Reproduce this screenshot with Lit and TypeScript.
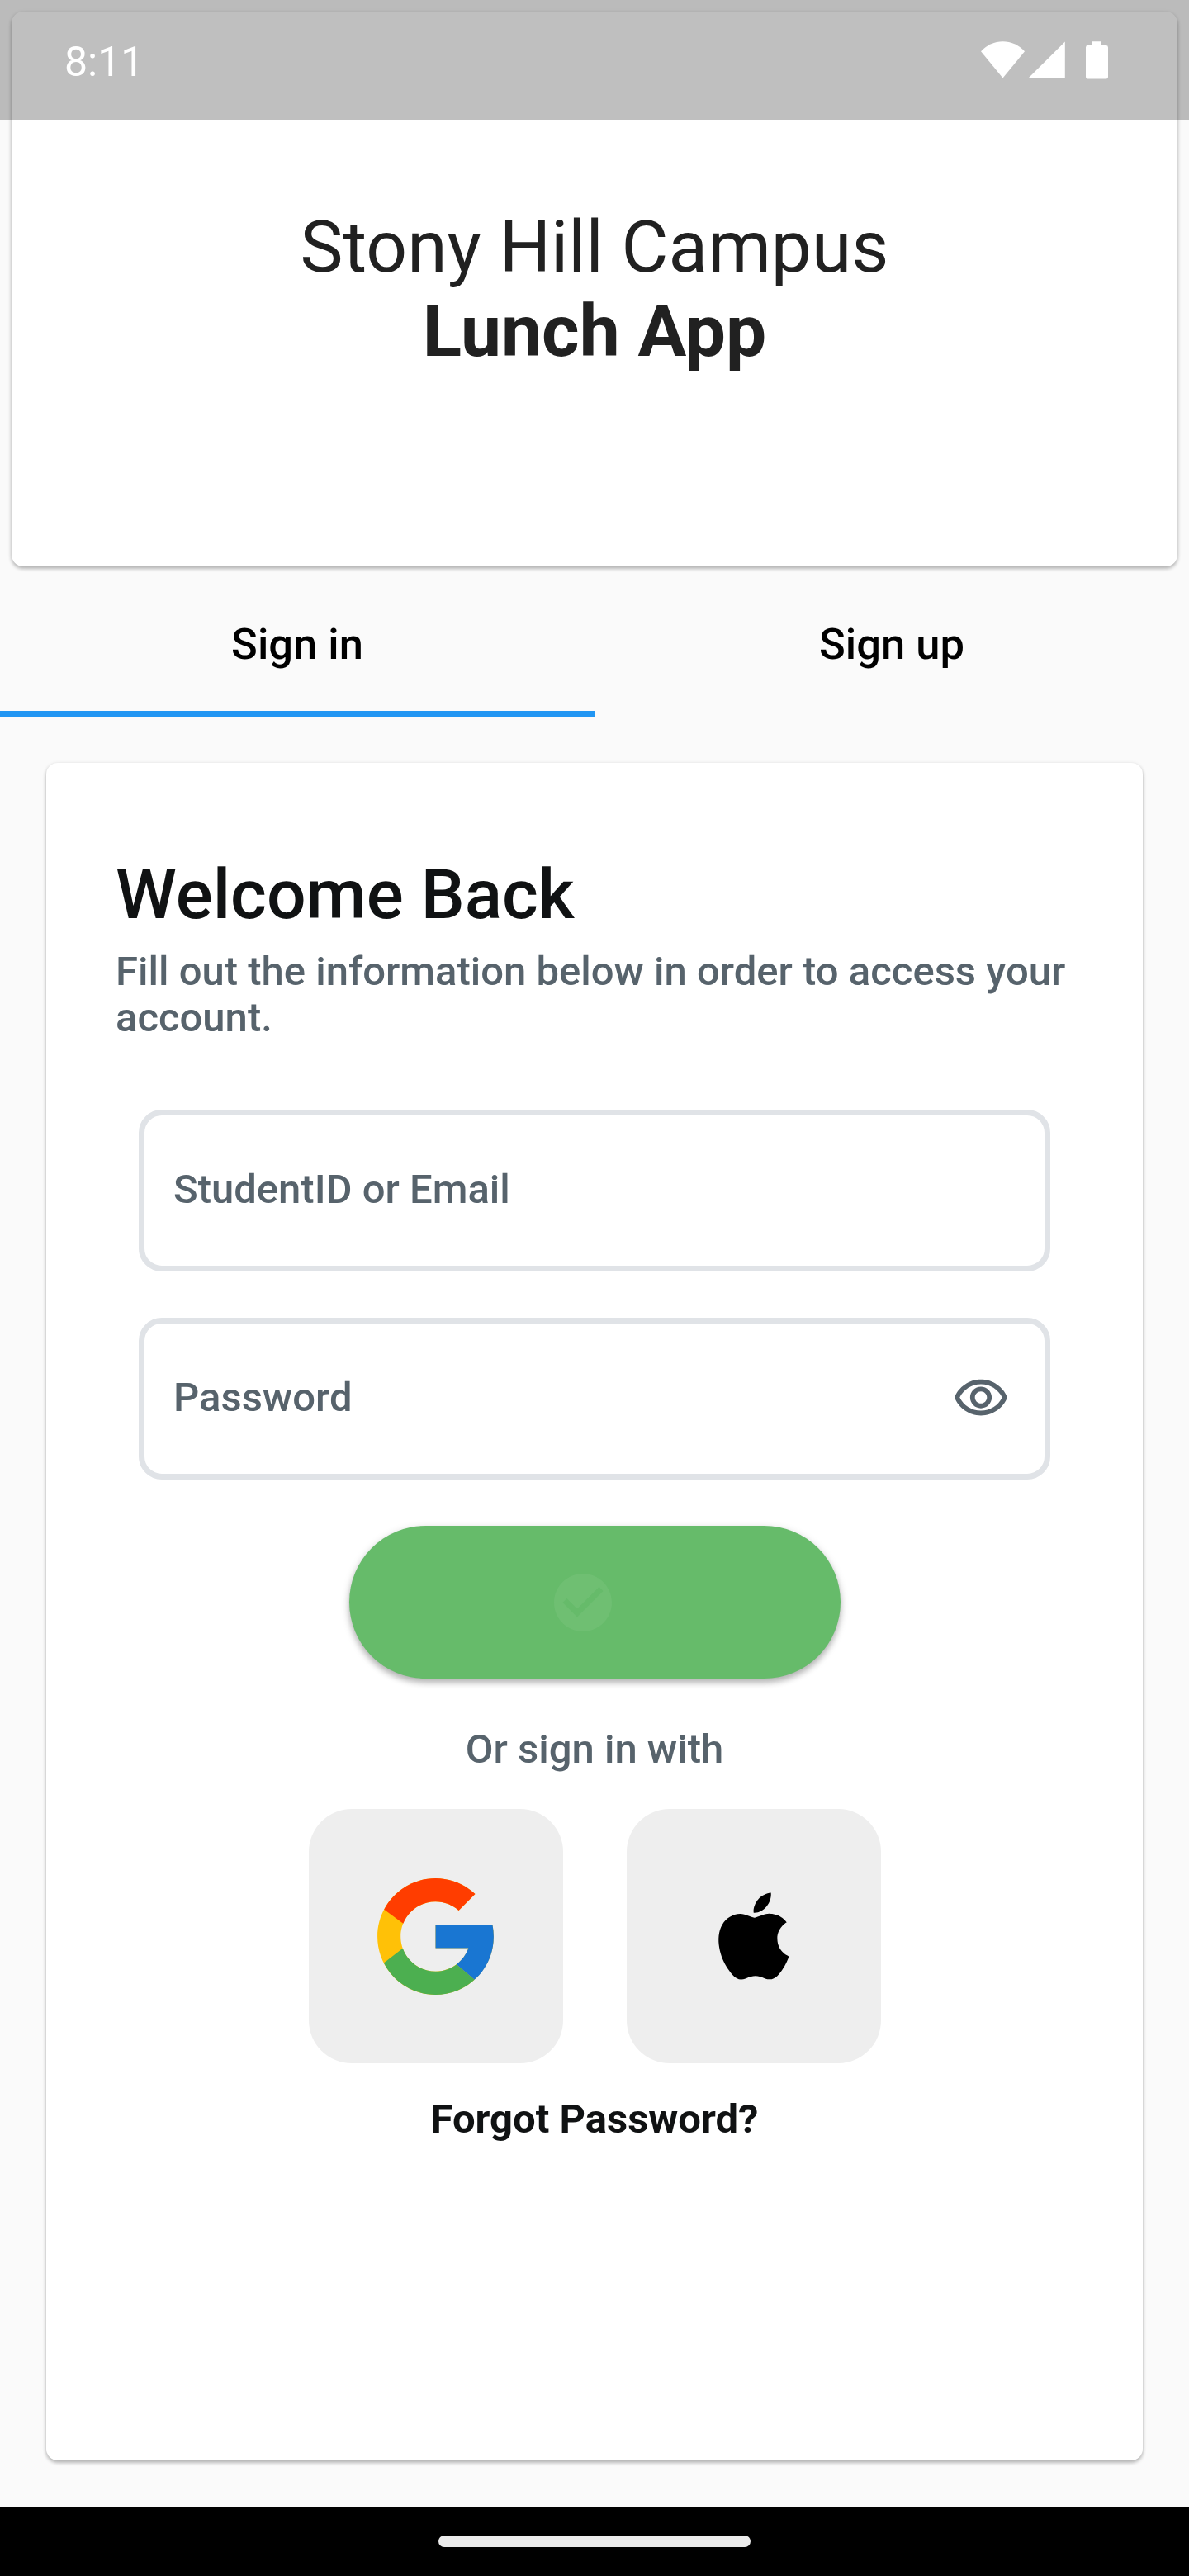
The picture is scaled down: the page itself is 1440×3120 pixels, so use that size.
import { LitElement, html, css, svg } from "lit";
import { customElement, property } from "lit/decorators.js";

const eyeIcon = svg`<path d="M12 6c3.79 0 7.17 2.13 8.82 5.5C19.17 14.87 15.79 17 12 17s-7.17-2.13-8.82-5.5C4.83 8.13 8.21 6 12 6m0-2C7 4 2.73 7.11 1 11.5 2.73 15.89 7 19 12 19s9.27-3.11 11-7.5C21.27 7.11 17 4 12 4zm0 5c1.38 0 2.5 1.12 2.5 2.5S13.38 14 12 14s-2.5-1.12-2.5-2.5S10.62 9 12 9m0-2c-2.48 0-4.5 2.02-4.5 4.5S9.52 16 12 16s4.5-2.02 4.5-4.5S14.48 7 12 7z"/>`;

@customElement("status-bar")
export class StatusBar extends LitElement {
  @property() time = "";

  static styles = css`
    :host {
      display: flex;
      justify-content: space-between;
      box-sizing: border-box;
      height: 145px;
      padding: 0 98px 0 78px;
      background: rgba(0, 0, 0, 0.25);
      color: #fff;
    }
    .time {
      font-size: 50px;
      line-height: 58px;
      padding-top: 46px;
    }
    .icons {
      display: block;
      margin-top: 50px;
    }
  `;

  render() {
    return html`
      <span class="time">${this.time}</span>
      <svg class="icons" width="154" height="46" viewBox="0 0 154 46" fill="#fff">
        <path d="M0 12.2C7.2 4.4 16.6.3 26.5.3S45.8 4.4 53 12.2L26.5 44.5z" />
        <path d="M57.5 44.6L101.8.5V44.6z" />
        <path d="M134.8.2h11.2v4.9h5.6a2.4 2.4 0 0 1 2.4 2.4v35.7a2.4 2.4 0 0 1-2.4 2.4h-22.2a2.4 2.4 0 0 1-2.4-2.4V7.5a2.4 2.4 0 0 1 2.4-2.4h5.4z" />
      </svg>
    `;
  }
}

@customElement("outlined-field")
export class OutlinedField extends LitElement {
  @property() label = "";
  @property({ type: Boolean }) secret = false;

  static styles = css`
    :host {
      display: flex;
      align-items: center;
      justify-content: space-between;
      box-sizing: border-box;
      height: 196px;
      padding: 0 42px 0 35px;
      border: 7px solid #e0e3e7;
      border-radius: 28px;
      background: #fff;
      color: #57636c;
      font-size: 49px;
      font-weight: 500;
      line-height: 57px;
    }
    .label {
      padding-bottom: 3px;
    }
    .eye {
      display: block;
      width: 70px;
      height: 70px;
      fill: #57636c;
    }
  `;

  render() {
    return html`
      <span class="label">${this.label}</span>
      ${this.secret ? html`<svg class="eye" viewBox="0 0 24 24">${eyeIcon}</svg>` : null}
    `;
  }
}

@customElement("app-root")
export class AppRoot extends LitElement {
  static styles = css`
    :host {
      display: flex;
      flex-direction: column;
      position: relative;
      box-sizing: border-box;
      width: 1440px;
      height: 3120px;
      background: #fafafa;
      font-family: Roboto, sans-serif;
      overflow: hidden;
    }
    .status {
      position: absolute;
      top: 0;
      left: 0;
      right: 0;
    }
    .card {
      box-sizing: border-box;
      background: #fff;
      border-radius: 14px;
      box-shadow: 0 3px 4px rgba(0, 0, 0, 0.22), 0 1px 5px rgba(0, 0, 0, 0.12);
    }
    .banner {
      height: 672px;
      margin: 14px 14px 0;
      padding-top: 234px;
      text-align: center;
      color: #212121;
      font-size: 87.5px;
      line-height: 102px;
    }
    .banner b {
      display: block;
      font-weight: 700;
    }
    .tabs {
      display: grid;
      grid-template-columns: 1fr 1fr;
      height: 168px;
      margin-top: 14px;
    }
    .tab {
      box-sizing: border-box;
      padding-top: 49px;
      border-bottom: 7px solid transparent;
      text-align: center;
      color: #000;
      font-size: 52.5px;
      font-weight: 500;
      line-height: 62px;
    }
    .active {
      border-bottom-color: #2196f3;
    }
    .panel {
      display: flex;
      flex-direction: column;
      align-items: center;
      height: 2056px;
      margin: 56px 56px 0;
      padding: 111px 84px 0;
    }
    .heading {
      align-self: stretch;
      color: #101213;
      font-size: 84px;
      font-weight: 500;
      line-height: 98px;
      margin: 0;
    }
    .hint {
      align-self: stretch;
      margin: 16px 0 0;
      color: #57636c;
      font-size: 49px;
      font-weight: 500;
      line-height: 56px;
    }
    .fields {
      display: flex;
      flex-direction: column;
      align-self: stretch;
      gap: 56px;
      margin: 83px 28px 0;
    }
    .submit {
      display: flex;
      align-items: center;
      justify-content: center;
      box-sizing: border-box;
      width: 595px;
      height: 185px;
      margin-top: 56px;
      padding-right: 28px;
      border-radius: 93px;
      background: #66bb6a;
      box-shadow: 0 5px 7px rgba(0, 0, 0, 0.2), 0 3px 11px rgba(0, 0, 0, 0.16);
    }
    .check {
      display: block;
      width: 84px;
      height: 84px;
      fill: rgba(255, 255, 255, 0.06);
    }
    .or {
      margin-top: 57px;
      color: #57636c;
      font-size: 49px;
      font-weight: 500;
      line-height: 58px;
    }
    .social {
      display: flex;
      gap: 77px;
      margin-top: 43px;
    }
    .tile {
      display: flex;
      align-items: center;
      justify-content: center;
      width: 308px;
      height: 308px;
      border-radius: 52px;
      background: #eee;
    }
    .google {
      width: 169px;
      height: 169px;
    }
    .apple {
      width: 126px;
      height: 126px;
    }
    .forgot {
      margin-top: 39px;
      color: #101213;
      font-size: 49px;
      font-weight: 700;
      line-height: 58px;
    }
    .nav {
      display: flex;
      align-items: center;
      justify-content: center;
      height: 84px;
      margin-top: auto;
      background: #000;
    }
    .pill {
      width: 378px;
      height: 14px;
      border-radius: 7px;
      background: #ebebeb;
    }
  `;

  render() {
    return html`
      <header class="card banner">Stony Hill Campus<b>Lunch App</b></header>
      <nav class="tabs">
        <div class="tab active">Sign in</div>
        <div class="tab">Sign up</div>
      </nav>
      <main class="card panel">
        <h1 class="heading">Welcome Back</h1>
        <p class="hint">Fill out the information below in order to access your account.</p>
        <div class="fields">
          <outlined-field label="StudentID or Email"></outlined-field>
          <outlined-field label="Password" secret></outlined-field>
        </div>
        <div class="submit" role="button">
          <svg class="check" viewBox="0 0 24 24">
            <path d="M12 2C6.48 2 2 6.48 2 12s4.48 10 10 10 10-4.48 10-10S17.52 2 12 2zm-2 15l-5-5 1.41-1.41L10 14.17l7.59-7.59L19 8l-9 9z" />
          </svg>
        </div>
        <div class="or">Or sign in with</div>
        <div class="social">
          <div class="tile">
            <svg class="google" viewBox="0 0 48 48">
              <path fill="#FFC107" d="M43.611 20.083H42V20H24v8h11.303c-1.649 4.657-6.08 8-11.303 8-6.627 0-12-5.373-12-12s5.373-12 12-12c3.059 0 5.842 1.154 7.961 3.039l5.657-5.657C34.046 6.053 29.268 4 24 4 12.955 4 4 12.955 4 24s8.955 20 20 20 20-8.955 20-20c0-1.341-.138-2.65-.389-3.917z" />
              <path fill="#FF3D00" d="M6.306 14.691l6.571 4.819C14.655 15.108 18.961 12 24 12c3.059 0 5.842 1.154 7.961 3.039l5.657-5.657C34.046 6.053 29.268 4 24 4 16.318 4 9.656 8.337 6.306 14.691z" />
              <path fill="#4CAF50" d="M24 44c5.166 0 9.86-1.977 13.409-5.192l-6.19-5.238C29.211 35.091 26.715 36 24 36c-5.202 0-9.619-3.317-11.283-7.946l-6.522 5.025C9.505 39.556 16.227 44 24 44z" />
              <path fill="#1976D2" d="M43.611 20.083H42V20H24v8h11.303c-.792 2.237-2.231 4.166-4.087 5.571l6.19 5.238C36.971 39.205 44 34 44 24c0-1.341-.138-2.65-.389-3.917z" />
            </svg>
          </div>
          <div class="tile">
            <svg class="apple" viewBox="0 0 24 24">
              <path d="M18.71 19.5c-.83 1.24-1.71 2.45-3.05 2.47-1.34.03-1.77-.79-3.29-.79-1.53 0-2 .77-3.27.82-1.31.05-2.3-1.32-3.14-2.53C4.25 17 2.94 12.45 4.7 9.39c.87-1.52 2.43-2.48 4.12-2.51 1.28-.02 2.5.87 3.29.87.78 0 2.26-1.07 3.81-.91.65.03 2.47.26 3.64 1.98-.09.06-2.17 1.28-2.15 3.81.03 3.02 2.65 4.03 2.68 4.04-.03.07-.42 1.44-1.38 2.83M13 3.5c.73-.83 1.94-1.46 2.94-1.5.13 1.17-.34 2.35-1.04 3.19-.69.85-1.83 1.51-2.95 1.42-.15-1.15.41-2.35 1.05-3.11z" />
            </svg>
          </div>
        </div>
        <div class="forgot">Forgot Password?</div>
      </main>
      <footer class="nav"><div class="pill"></div></footer>
      <status-bar class="status" time="8:11"></status-bar>
    `;
  }
}
